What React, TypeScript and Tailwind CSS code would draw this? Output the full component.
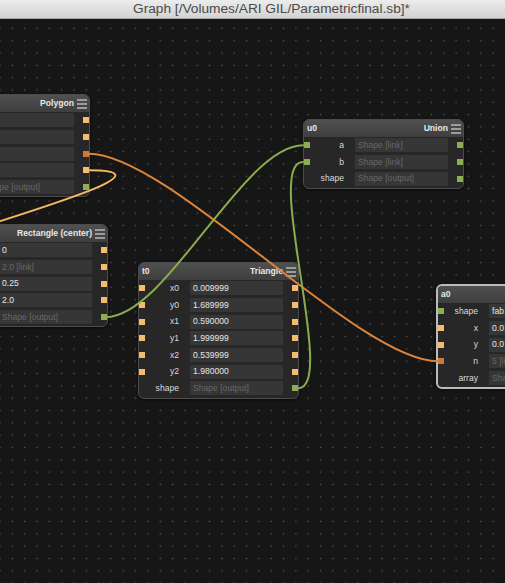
import React from "react";

type P = "o" | "d" | "g" | null;
type Row = { label?: string; value?: string; muted?: boolean; left?: P; right?: P };

const portCls: Record<string, string> = {
  o: "bg-[#f7bb6c]",
  d: "bg-[#cd7a39]",
  g: "bg-[#8ead50]",
};

function Port({ t, side }: { t: P; side: "l" | "r" }) {
  if (!t) return null;
  return (
    <div
      className={`absolute top-1/2 -translate-y-1/2 w-[6px] h-[6px] ${portCls[t]} ${
        side === "l" ? "left-0" : "right-0"
      }`}
    />
  );
}

function Hamburger() {
  return (
    <div className="flex flex-col gap-[2px] w-[10px] ml-[3px] shrink-0">
      <div className="h-[2px] bg-[#9c9c9c]" />
      <div className="h-[2px] bg-[#9c9c9c]" />
      <div className="h-[2px] bg-[#9c9c9c]" />
    </div>
  );
}

function Node({
  pos,
  id,
  title,
  rows,
  selected,
}: {
  pos: string;
  id: string;
  title: string;
  rows: Row[];
  selected?: boolean;
}) {
  return (
    <div
      className={`absolute w-[161px] rounded-[6px] overflow-hidden bg-[#272727] shadow-[0_1px_3px_rgba(0,0,0,0.6)] ${pos} ${
        selected ? "border-2 border-[#bcbcbc]" : "border border-[#4c4c4c]"
      }`}
    >
      <div className="h-[17px] flex items-center pl-[3px] pr-[2px] bg-linear-to-b from-[#505050] to-[#3e3e3e] text-[8.6px] font-bold text-[#e8e8e8]">
        <span>{id}</span>
        <span className="ml-auto">{title}</span>
        <Hamburger />
      </div>
      <div className="pb-[1px]">
        {rows.map((r, i) => (
          <div key={i} className="relative flex items-center h-[16.67px]">
            <Port t={r.left ?? null} side="l" />
            <div className="w-[40px] text-right text-[8.6px] text-[#dadada] leading-none">{r.label ?? ""}</div>
            <div
              className={`ml-[11px] w-[93px] h-[14px] bg-[#363636] pl-[3px] flex items-center overflow-hidden whitespace-nowrap text-[8.6px] leading-none ${
                r.muted ? "text-[#676767]" : "text-[#e6e6e6]"
              }`}
            >
              {r.value ?? ""}
            </div>
            <Port t={r.right ?? null} side="r" />
          </div>
        ))}
      </div>
    </div>
  );
}

export default function App() {
  return (
    <div className="w-[505px] h-[583px] overflow-hidden flex flex-col font-['Liberation_Sans',Arial,sans-serif] select-none">
      <div className="h-[19px] shrink-0 bg-linear-to-b from-[#ececec] to-[#d3d3d3] border-b border-[#a9a9a9] pl-[133px] text-[13.7px] leading-[18px] text-[#4a4a4a] whitespace-nowrap">
        Graph [/Volumes/ARI GIL/Parametricfinal.sb]*
      </div>
      <div className="relative flex-1 bg-[#161616] bg-[radial-gradient(circle,#505050_0.6px,transparent_1.1px)] bg-[length:12.33px_12.33px] bg-[position:-6.17px_3.2px]">
        <Node
          pos="left-[-71px] top-[75px]"
          id="p0"
          title="Polygon"
          rows={[
            { label: "x", value: "0.0", right: "o", left: "o" },
            { label: "y", value: "0.0", right: "o", left: "o" },
            { label: "n", value: "5", right: "d", left: "o" },
            { label: "r", value: "1.0", right: "o", left: "o" },
            { label: "shape", value: "Shape [output]", muted: true, right: "g" },
          ]}
        />
        <Node
          pos="left-[-53px] top-[205px]"
          id="r0"
          title="Rectangle (center)"
          rows={[
            { label: "x", value: "0", right: "o", left: "o" },
            { label: "y", value: "2.0 [link]", muted: true, right: "o", left: "o" },
            { label: "w", value: "0.25", right: "o", left: "o" },
            { label: "h", value: "2.0", right: "o", left: "o" },
            { label: "shape", value: "Shape [output]", muted: true, right: "g" },
          ]}
        />
        <Node
          pos="left-[138px] top-[243px]"
          id="t0"
          title="Triangle"
          rows={[
            { label: "x0", value: "0.009999", left: "o", right: "o" },
            { label: "y0", value: "1.689999", left: "o", right: "o" },
            { label: "x1", value: "0.590000", left: "o", right: "o" },
            { label: "y1", value: "1.999999", left: "o", right: "o" },
            { label: "x2", value: "0.539999", left: "o", right: "o" },
            { label: "y2", value: "1.980000", left: "o", right: "o" },
            { label: "shape", value: "Shape [output]", muted: true, right: "g" },
          ]}
        />
        <Node
          pos="left-[303px] top-[100px]"
          id="u0"
          title="Union"
          rows={[
            { label: "a", value: "Shape [link]", muted: true, left: "g", right: "g" },
            { label: "b", value: "Shape [link]", muted: true, left: "g", right: "g" },
            { label: "shape", value: "Shape [output]", muted: true, right: "g" },
          ]}
        />
        <Node
          pos="left-[436px] top-[265px]"
          id="a0"
          title="Array"
          selected
          rows={[
            { label: "shape", value: "fab", left: "g", right: "g" },
            { label: "x", value: "0.0", left: "o", right: "o" },
            { label: "y", value: "0.0", left: "o", right: "o" },
            { label: "n", value: "5 [link]", muted: true, left: "d", right: "o" },
            { label: "array", value: "Shape [output]", muted: true, right: "g" },
          ]}
        />
        <svg className="absolute inset-0 pointer-events-none" width="505" height="564" viewBox="0 0 505 564">
          <g transform="translate(0,-19)" fill="none" strokeWidth="2" strokeLinecap="round">
            <path d="M 89 153.7 C 169 153.7, 358 361.3, 438 361.3" stroke="#d9843d" />
            <path d="M 89 170.3 C 219 170.3, -180 262, -80 262" stroke="#f4b764" />
            <path d="M 106 317 C 166 317, 243 145.3, 303 145.3" stroke="#8cab4f" />
            <path d="M 298 388.3 C 338 388.3, 263 162, 303 162" stroke="#8cab4f" />
          </g>
        </svg>
      </div>
    </div>
  );
}
